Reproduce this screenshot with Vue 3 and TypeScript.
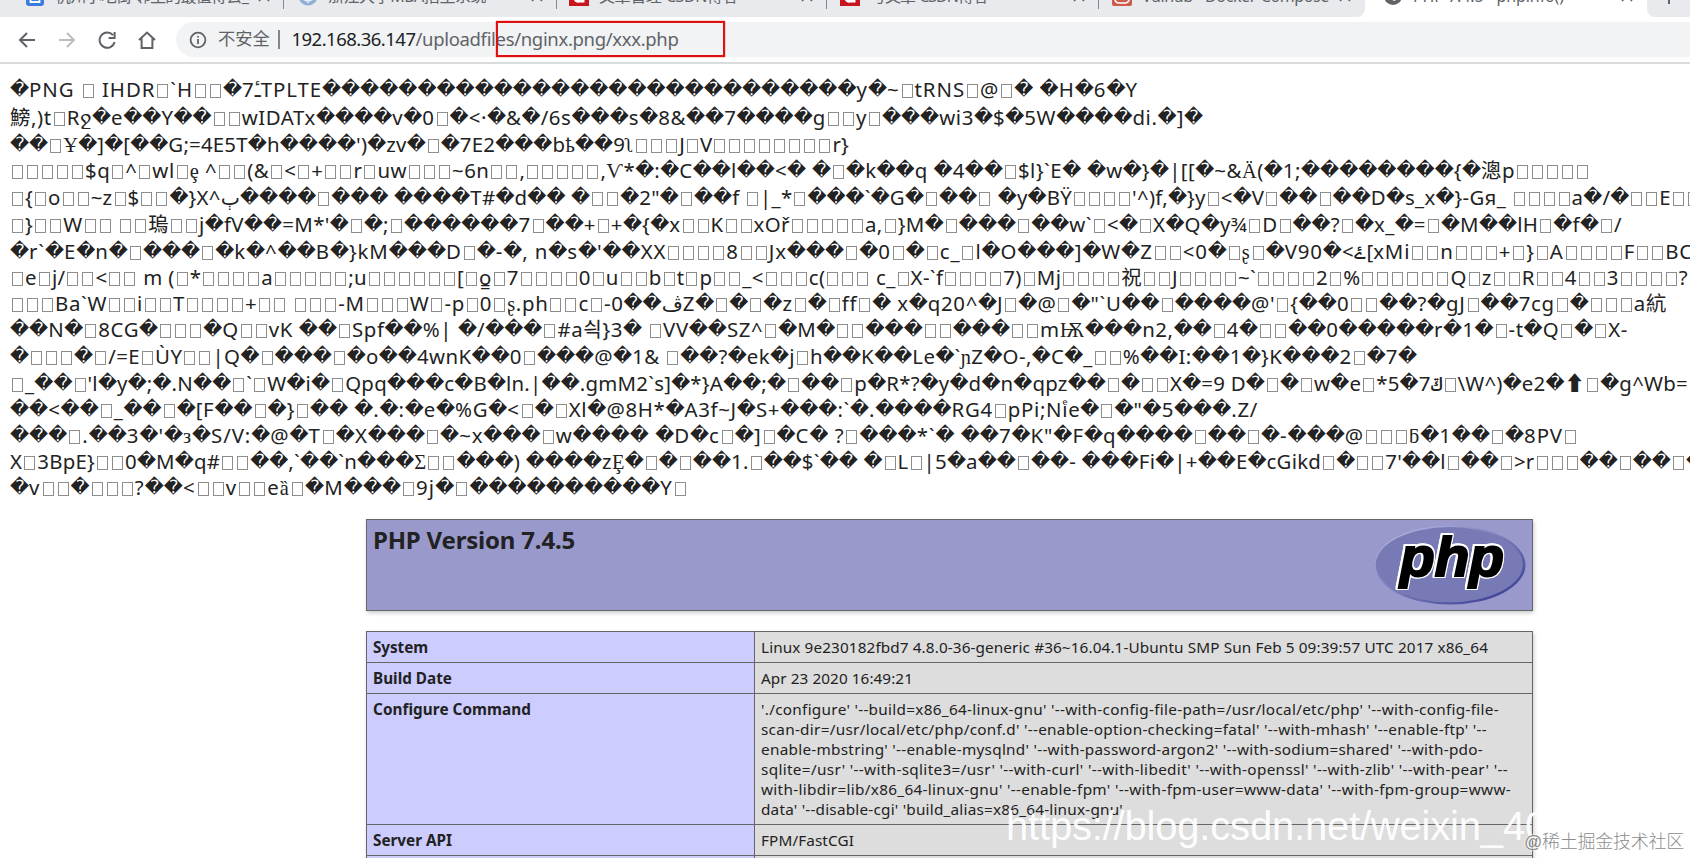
<script setup lang="ts">
import { nextTick, onMounted, ref } from 'vue'

interface Tab {
  title: string
  icon: 'paw' | 'globe' | 'csdn' | 'vulhub' | 'world'
  cls: string
  width: number
}

interface Line {
  text: string
  width: number
  height: number
}

interface Token {
  kind: 'text' | 'bad' | 'box' | 'odd'
  value: string
}

const tabs: Tab[] = [
  { title: '杭州小吃街 邻里的最值得去_', icon: 'paw', cls: 't1', width: 193 },
  { title: '浙江大学MBA招生系统', icon: 'globe', cls: 't2', width: 158 },
  { title: '文章管理-CSDN博客', icon: 'csdn', cls: 't3', width: 139 },
  { title: '写文章-CSDN博客', icon: 'csdn', cls: 't4', width: 118 },
  { title: 'Vulhub - Docker-Compose', icon: 'vulhub', cls: 't5', width: 187 },
  { title: 'PHP 7.4.5 - phpinfo()', icon: 'world', cls: 'active', width: 151 },
]

const bad = (n: number) => '�'.repeat(n)

const dump: Line[] = [
  { text: '�PNG ▯ IHDR▯`H▯▯�7\u0640\u0654TPLTE' + bad(28) + 'y�~▯tRNS▯@▯� �H�6�Y', width: 1128, height: 28 },
  { text: '鰟,)t▯Rջ�e��Y��▯▯wIDATx����v�0▯�<·�&�/6s���s�8&��7����g▯▯y▯���wi3�$�5W����di.�]�', width: 1193, height: 27 },
  { text: "��▯Ұ�]�[��G;=4E5T�h����')�zv�▯�7E2���bҍ��9ʅ▯▯▯J▯V▯▯▯▯▯▯▯▯r}", width: 839, height: 26 },
  { text: '▯▯▯▯▯$q▯^▯wl▯ȩ ^▯▯(&▯<▯+▯▯r▯uw▯▯▯~6n▯▯,▯▯▯▯▯,Ѵ*�:�C��l��<� �▯�k��q �4��▯$l}`E� �w�}�|[[�~&Ӓ(�1;' + bad(8) + '{�漗p▯▯▯▯▯', width: 1580, height: 27 },
  { text: '▯{▯o▯▯~z▯$▯▯�}X^ٻ����▯��� ����T#�d�� �▯▯�2"�▯��f ▯|_*▯���`�G�▯��▯ �y�BŸ▯▯▯▯\'^)f,�}y▯<�V▯��▯��D�s_x�}-Gя_ ▯▯▯▯a�/�▯▯E▯▯', width: 1691, height: 27 },
  { text: "▯}▯▯W▯▯ ▯▯瑦▯▯j�fV��=M*'�▯�;▯������7▯��+▯+�{�x▯▯K▯▯xOř▯▯▯▯▯a,▯}M�▯���▯��w`▯<�▯X�Q�y¾▯D▯��?▯�x_�=▯�M��lH▯�f�▯/", width: 1612, height: 27 },
  { text: "�r`�E�n�▯���▯�k�^��B�}kM���D▯�-�, n�s�'��XX▯▯▯▯8▯▯Jx���▯�0▯�▯c_▯l�O���]�W�Z▯▯<0�▯ʂ▯�V90�<ۓ[xMi▯▯n▯▯▯+▯}▯A▯▯▯▯F▯▯BC", width: 1683, height: 26 },
  { text: '▯e▯j/▯▯<▯▯ m (▯*▯▯▯▯a▯▯▯▯▯;u▯▯▯▯▯▯[▯o̳▯7▯▯▯▯0▯u▯▯b▯t▯p▯▯_<▯▯▯c(▯▯▯ c_▯X-`f▯▯▯▯7)▯Mj▯▯▯▯祝▯▯J▯▯▯▯~`▯▯▯▯2▯%▯▯▯▯▯▯Q▯z▯▯R▯▯4▯▯3▯▯▯▯?', width: 1678, height: 26 },
  { text: '▯▯▯Ba`W▯▯i▯▯T▯▯▯▯+▯▯ ▯▯▯-M▯▯▯W▯-p▯0▯ʂ.ph▯▯c▯-0��ڤZ�▯�▯�z▯�▯ff▯� x�q20^�J▯�@▯�"`U��▯����@\'▯{��0▯▯��?�gJ▯��7cg▯�▯▯▯a䋁', width: 1657, height: 26 },
  { text: '��N�▯8CG�▯▯▯�Q▯▯vK ��▯Spf��%| �/���▯#a싁}3� ▯VV��SZ^▯�M�▯▯���▯▯���▯▯mѬ���n2,��▯4�▯▯��0�����r�1�▯-t�Q▯�▯X-', width: 1618, height: 27 },
  { text: '�▯▯▯�▯/=E▯ÙY▯▯|Q�▯���▯�o��4wnK��0▯���@�1& ▯��?�ek�j▯h��K��Le�`ɲZ�O-,�C�_▯▯%��I:��1�}K���2▯�7�', width: 1407, height: 27 },
  { text: "▯_��▯'l�y�;�.N��▯`▯W�i�▯Qpq���c�B�ln.|��.gmM2`s]�*}A��;�▯��▯p�R*?�y�d�n�qpz��▯�▯▯X�=9 D�▯�▯w�e▯*5�7ݿ▯\\W^)�e2�⬆▯�g^Wb=", width: 1678, height: 26 },
  { text: '��<��▯_��▯�[F��▯�}▯�� �.�:�e�%G�<▯�▯Xl�@8H*�A3f~J�S+���:`�.����RG4▯pPi;Niͤe�▯�"�5���.Z/', width: 1248, height: 26 },
  { text: "���▯.��3�'�з�S/V:�@�T▯�X���▯�~x���▯w���� �D�c▯�]▯�C� ?▯���*`� ��7�K\"�F�q����▯��▯�-���@▯▯▯ƃ�1��▯�8PV▯", width: 1568, height: 26 },
  { text: "X▯3BpE}▯▯0�M�q#▯▯��,`��`n���Σ▯▯���) ����zȨ�▯�▯��1.▯��$`�� �▯L▯|5�a��▯��- ���Fi�|+��E�cGikd▯�▯▯7'��l▯��▯>r▯▯▯��▯��▯�", width: 1695, height: 26 },
  { text: '�v▯▯�▯▯▯?��<▯▯v▯▯eȁ▯�M���▯9j�▯' + bad(10) + 'Y▯', width: 678, height: 26 },
]

const oddChars = /[\u0370-\u03ff\u0400-\u042e\u0430-\u044e\u0460-\u07ff\u0180-\u02af]/

function tokenize(text: string): Token[] {
  const out: Token[] = []
  for (const ch of Array.from(text)) {
    if (ch === '�') out.push({ kind: 'bad', value: ch })
    else if (ch === '▯') out.push({ kind: 'box', value: '' })
    else {
      const kind = oddChars.test(ch) ? 'odd' : 'text'
      const last = out[out.length - 1]
      if (last && last.kind === kind) last.value += ch
      else out.push({ kind, value: ch })
    }
  }
  return out
}

const dumpLines = dump.map((l) => ({ ...l, tokens: tokenize(l.text) }))

const rows = [
  {
    label: 'System',
    labelWidth: 55,
    lines: [{ text: 'Linux 9e230182fbd7 4.8.0-36-generic #36~16.04.1-Ubuntu SMP Sun Feb 5 09:39:57 UTC 2017 x86_64', width: 727 }],
  },
  { label: 'Build Date', labelWidth: 79, lines: [{ text: 'Apr 23 2020 16:49:21', width: 152 }] },
  {
    label: 'Configure Command',
    labelWidth: 158,
    lines: [
      { text: "'./configure' '--build=x86_64-linux-gnu' '--with-config-file-path=/usr/local/etc/php' '--with-config-file-", width: 738 },
      { text: "scan-dir=/usr/local/etc/php/conf.d' '--enable-option-checking=fatal' '--with-mhash' '--enable-ftp' '--", width: 726 },
      { text: "enable-mbstring' '--enable-mysqlnd' '--with-password-argon2' '--with-sodium=shared' '--with-pdo-", width: 722 },
      { text: "sqlite=/usr' '--with-sqlite3=/usr' '--with-curl' '--with-libedit' '--with-openssl' '--with-zlib' '--with-pear' '--", width: 747 },
      { text: "with-libdir=lib/x86_64-linux-gnu' '--enable-fpm' '--with-fpm-user=www-data' '--with-fpm-group=www-", width: 750 },
      { text: "data' '--disable-cgi' 'build_alias=x86_64-linux-gnu'", width: 362 },
    ],
  },
  { label: 'Server API', labelWidth: 79, lines: [{ text: 'FPM/FastCGI', width: 93 }] },
]

const root = ref<HTMLElement | null>(null)

// Spreads the tracking of every measured run so that it fills its set width.
onMounted(async () => {
  await nextTick()
  const runs = root.value?.querySelectorAll<HTMLElement>('[data-width]') ?? []
  runs.forEach((el) => {
    const target = Number(el.dataset.width)
    const fixed = el.querySelectorAll('.bad').length
    const count = (el.textContent ?? '').trim().length - fixed
    let spacing = 0
    for (let pass = 0; pass < 3; pass++) {
      spacing += (target - el.getBoundingClientRect().width) / count
      el.style.letterSpacing = `${spacing}px`
    }
  })
})
</script>

<template>
  <div ref="root" class="screen">
    <div class="tabstrip">
      <div v-for="(t, i) in tabs" :key="i" class="tab" :class="t.cls">
        <div class="tab-inner">
          <svg class="fav" viewBox="0 0 20 20">
            <g v-if="t.icon === 'paw'">
              <rect x="1" width="18" height="20" rx="3" fill="#3b7ddd" />
              <path d="M5.5 8h9v8h-9zM10 6v6" fill="none" stroke="#fff" stroke-width="1.8" />
            </g>
            <g v-else-if="t.icon === 'globe'">
              <circle cx="10" cy="10" r="9.5" fill="#8fb0d4" />
              <path d="M5 6q5 5 10 0M4 12q6 6 12 0M10 2v15" fill="none" stroke="#e8f0fa" stroke-width="1.5" />
            </g>
            <g v-else-if="t.icon === 'csdn'">
              <rect width="20" height="20" fill="#c8161e" />
              <path d="M14 6H9q-3 0-3 5t4 4h4V9" fill="none" stroke="#fff" stroke-width="3" />
            </g>
            <g v-else-if="t.icon === 'vulhub'">
              <rect width="20" height="20" rx="2" fill="#cf5b4a" />
              <path d="M3 11h14v3q-1 3-4 3H7q-3 0-4-3zM7 8v5M10 8v5M13 8v5" fill="none" stroke="#fff" stroke-width="1.5" />
            </g>
            <g v-else>
              <circle cx="10" cy="10" r="9" fill="#5f6368" />
              <path d="M5 6l4 3v5l3 1 3-6-3-3z" fill="#fff" />
            </g>
          </svg>
          <span class="tab-title"><span class="run" :data-width="t.width">{{ t.title }}</span></span>
          <svg class="close" viewBox="0 0 12 12"><path d="M1 1l10 10M11 1L1 11" stroke="#5f6368" stroke-width="1.6" /></svg>
        </div>
      </div>
      <div class="newtab"><svg viewBox="0 0 14 14"><path d="M7 0v14M0 7h14" stroke="#5f6368" stroke-width="2" /></svg></div>
    </div>

    <div class="toolbar">
      <svg class="nav" viewBox="0 0 20 20"><path d="M18 10H3M10 3l-7 7 7 7" /></svg>
      <svg class="nav dim" viewBox="0 0 20 20"><path d="M2 10h15M10 3l7 7-7 7" /></svg>
      <svg class="nav" viewBox="0 0 20 20"><path d="M16 5.2A7.6 7.6 0 1 0 17.6 12M17.6 2v6h-6" /></svg>
      <svg class="nav" viewBox="0 0 20 20"><path d="M2 10l8-7.5 8 7.5M4.6 8.5V18h10.8V8.5" /></svg>
      <div class="omnibox">
        <svg class="info" viewBox="0 0 18 18">
          <circle cx="9" cy="9" r="7.4" fill="none" stroke="#5f6368" stroke-width="1.8" />
          <path d="M9 8v5M9 5v1.6" stroke="#5f6368" stroke-width="1.8" />
        </svg>
        <span class="insecure">不安全</span>
        <span class="sep"></span>
        <span class="url">
          <span class="run host" data-width="124">192.168.36.147</span><span class="run" data-width="263">/uploadfiles/nginx.png/xxx.php</span>
        </span>
        <span class="highlight"></span>
      </div>
    </div>

    <div class="page">
      <div class="dump">
        <div v-for="(l, i) in dumpLines" :key="i" class="dump-line" :style="{ height: l.height + 'px' }">
          <span class="run" :data-width="l.width"><template v-for="(k, j) in l.tokens" :key="j"><span v-if="k.kind === 'bad'" class="bad">{{ k.value }}</span><i v-else-if="k.kind === 'box'" class="box"></i><span v-else :class="k.kind">{{ k.value }}</span></template></span>
        </div>
      </div>

      <div class="center">
        <div class="banner">
          <h1><span class="run" data-width="202">PHP Version 7.4.5</span></h1>
          <svg class="logo" viewBox="0 0 152 80">
            <defs>
              <linearGradient id="rim" x1="0" y1="0" x2="1" y2="1">
                <stop offset="0.15" stop-color="#aab0de" />
                <stop offset="0.5" stop-color="#7679b4" />
                <stop offset="0.85" stop-color="#45489a" />
              </linearGradient>
            </defs>
            <ellipse cx="76" cy="40" rx="75.5" ry="39.5" fill="url(#rim)" />
            <ellipse cx="75.3" cy="39.7" rx="73.6" ry="37.6" fill="#777ab5" />
            <g class="logo-halo"><text x="26" y="51" textLength="104" lengthAdjust="spacingAndGlyphs">php</text></g>
          </svg>
        </div>

        <div class="info-table">
          <div v-for="r in rows" :key="r.label" class="row">
            <div class="key"><span class="run" :data-width="r.labelWidth">{{ r.label }}</span></div>
            <div class="val">
              <div v-for="(v, i) in r.lines" :key="i"><span class="run" :data-width="v.width">{{ v.text }}</span></div>
            </div>
          </div>
          <div class="row next-row">
            <div class="key"></div>
            <div class="val"></div>
          </div>
        </div>
      </div>
    </div>

    <div class="mark-url"><span class="run" data-width="541">https://blog.csdn.net/weixin_40</span></div>
    <div class="mark-site"><span class="run" data-width="160">@稀土掘金技术社区</span></div>
  </div>
</template>

<style>
html,
body {
  margin: 0;
  overflow: hidden;
  background: #fff;
}
</style>

<style scoped>
.screen {
  position: relative;
  width: 1690px;
  height: 858px;
  overflow: hidden;
  background: #fff;
  color: #222;
  font-family: 'Noto Sans', 'Noto Sans CJK SC', 'DejaVu Sans', sans-serif;
}
.run {
  display: inline-block;
  white-space: pre;
}

/* tab strip */
.tabstrip {
  display: flex;
  height: 17px;
  overflow: hidden;
  background: #fff;
}
.tab {
  display: flex;
  align-items: flex-end;
  box-sizing: border-box;
  height: 17px;
  position: relative;
  background: #e8eaed;
}
.tab::after {
  content: '';
  position: absolute;
  right: 0;
  top: 0;
  width: 1px;
  height: 9px;
  background: #85888c;
}
.t1 { width: 284px; padding-left: 25px; }
.t2 { width: 273px; padding-left: 14px; }
.t3 { width: 270px; padding-left: 12px; }
.t4 { width: 272px; padding-left: 13px; }
.t5 {
  width: 266px;
  padding-left: 13px;
  border-bottom-right-radius: 8px;
}
.active {
  width: 282px;
  padding-left: 18px;
  background: #fff;
}
.t5::after,
.active::after { display: none; }
.tab-inner {
  display: flex;
  align-items: center;
  width: 100%;
  height: 32px;
  margin-bottom: 5px;
  flex: none;
}
.fav {
  width: 20px;
  height: 20px;
  margin-right: 10px;
  flex: none;
}
.tab-title {
  flex: 1;
  overflow: hidden;
  font-size: 16px;
  line-height: 26px;
  color: #5f6368;
  white-space: nowrap;
}
.close {
  width: 12px;
  height: 12px;
  margin-right: 14px;
  flex: none;
}
.newtab {
  flex: 1;
  padding-left: 15px;
  border-bottom-left-radius: 8px;
  background: #e8eaed;
}
.newtab svg {
  display: block;
  width: 14px;
  height: 14px;
  margin-top: -10px;
}

/* toolbar */
.toolbar {
  display: flex;
  align-items: center;
  height: 47px;
  padding-left: 17px;
  box-sizing: border-box;
  border-bottom: 2px solid #d9dcdc;
  background: #fff;
}
.nav {
  width: 20px;
  height: 20px;
  margin-right: 20px;
  fill: none;
  stroke: #5f6368;
  stroke-width: 2;
}
.nav.dim { stroke: #babcbe; }
.omnibox {
  position: relative;
  display: flex;
  align-items: center;
  flex: 1;
  height: 35px;
  margin-left: -1px;
  padding-left: 13px;
  border-radius: 18px 0 0 18px;
  background: #f1f3f4;
  font-size: 18.5px;
}
.info {
  width: 18px;
  height: 18px;
  margin-right: 11px;
}
.insecure {
  width: 52px;
  font-size: 17.3px;
  line-height: 30px;
  margin-bottom: 1px;
  color: #5f6368;
}
.sep {
  width: 1.5px;
  height: 19px;
  margin: 0 11px 0 8px;
  background: #80868b;
}
.url {
  display: flex;
  line-height: 30px;
  margin-left: 1px;
  margin-bottom: 2px;
  color: #5f6368;
}
.host { color: #202124; }
.highlight {
  position: absolute;
  left: 320px;
  top: -1px;
  width: 225px;
  height: 32px;
  border: 2px solid #e01010;
  box-shadow: 0 0 1px #e01010;
}

/* binary dump */
.page { padding-top: 12px; }
.dump {
  padding-left: 10px;
  font-size: 20.4px;
  white-space: nowrap;
}
.dump-line {
  line-height: 26px;
  direction: ltr;
  unicode-bidi: bidi-override;
}
.dump-line .run {
  height: 26px;
  vertical-align: top;
}
.odd {
  font-family: 'Liberation Serif', 'DejaVu Serif', 'DejaVu Sans', serif;
}
.bad {
  display: inline-block;
  width: 19.1px;
  height: 26px;
  overflow: hidden;
  vertical-align: top;
  font: 18.6px/26px 'DejaVu Sans', sans-serif;
  letter-spacing: 0;
}
.box {
  display: inline-block;
  box-sizing: border-box;
  width: 11px;
  height: 14px;
  margin: 0 2px;
  border: 1px solid #8d8d8d;
  vertical-align: -1px;
}

/* phpinfo */
.center {
  width: 1167px;
  margin: 19px 0 0 366px;
}
.banner {
  display: flex;
  justify-content: space-between;
  box-sizing: border-box;
  height: 92px;
  padding: 5px 6px;
  border: 1px solid #666;
  background: #9999cc;
  box-shadow: 1px 2px 4px #ccc;
}
h1 {
  margin: 0;
  font-size: 24px;
  line-height: 30px;
  font-weight: 700;
}
.logo {
  width: 152px;
  height: 80px;
}
.logo text {
  font: italic 700 55px 'Liberation Sans', sans-serif;
  fill: #000;
  stroke: #000;
  stroke-width: 2px;
}
.logo-halo {
  filter: drop-shadow(1.2px 0 0 #fff) drop-shadow(-1.2px 0 0 #fff) drop-shadow(0 1.2px 0 #fff) drop-shadow(0 -1.2px 0 #fff);
}
.info-table {
  margin-top: 20px;
  border-top: 1px solid #666;
  box-shadow: 1px 2px 4px #ccc;
  font-size: 15.3px;
  line-height: 20px;
}
.row {
  display: grid;
  grid-template-columns: 388px 1fr;
  border: 1px solid #666;
  border-top: 0;
}
.key {
  box-sizing: border-box;
  padding: 5px 6px;
  border-right: 1px solid #666;
  background: #ccccff;
  font-weight: 700;
}
.key .run,
.val .run { vertical-align: top; }
.val {
  padding: 5px 6px;
  background: #dddddd;
}
.val > div { height: 20px; }
.next-row { height: 30px; }

/* watermarks */
.mark-url {
  position: absolute;
  left: 1006px;
  top: 802px;
  font: 40px/48px 'Liberation Sans', sans-serif;
  color: rgba(255, 255, 255, 0.95);
}
.mark-site {
  position: absolute;
  right: 6px;
  top: 829px;
  font-size: 18px;
  line-height: 26px;
  font-family: 'Liberation Sans', 'Noto Sans CJK SC', sans-serif;
  font-weight: 300;
  color: #8c8c8c;
  text-shadow: 0 0 2px #fff, 0 0 2px #fff;
}
</style>
